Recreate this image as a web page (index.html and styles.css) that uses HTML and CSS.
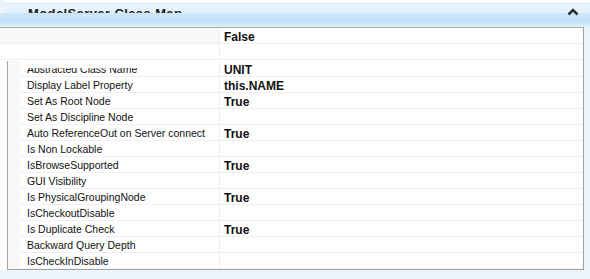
FILE: index.html
```html
<!DOCTYPE html>
<html>
<head>
<meta charset="utf-8">
<link rel="stylesheet" href="styles.css">
</head>
<body>
<div class="panel">
  <div class="head">
    <div class="head-top"><span class="title">ModelServer Class Map</span></div>
    <div class="head-band"></div>
    <svg class="chevron" width="12" height="8" viewBox="0 0 12 8"><polyline points="1.5,6.5 6,2 10.5,6.5" fill="none" stroke="#2b2f33" stroke-width="2.6"/></svg>
  </div>
  <div class="grid">
    <div class="row first"><div class="name"></div><div class="val">False</div></div>
    <div class="row"><div class="name"></div><div class="val"></div></div>
    <div class="body">
      <div class="gutter"></div>
      <div class="rows">
        <div class="row"><div class="name"><span class="clipped">Abstracted Class Name</span></div><div class="val">UNIT</div></div>
        <div class="row"><div class="name">Display Label Property</div><div class="val">this.NAME</div></div>
        <div class="row"><div class="name">Set As Root Node</div><div class="val">True</div></div>
        <div class="row"><div class="name">Set As Discipline Node</div><div class="val"></div></div>
        <div class="row"><div class="name">Auto ReferenceOut on Server connect</div><div class="val">True</div></div>
        <div class="row"><div class="name">Is Non Lockable</div><div class="val"></div></div>
        <div class="row"><div class="name">IsBrowseSupported</div><div class="val">True</div></div>
        <div class="row"><div class="name">GUI Visibility</div><div class="val"></div></div>
        <div class="row"><div class="name">Is PhysicalGroupingNode</div><div class="val">True</div></div>
        <div class="row"><div class="name">IsCheckoutDisable</div><div class="val"></div></div>
        <div class="row"><div class="name">Is Duplicate Check</div><div class="val">True</div></div>
        <div class="row"><div class="name">Backward Query Depth</div><div class="val"></div></div>
        <div class="row"><div class="name">IsCheckInDisable</div><div class="val"></div></div>
      </div>
    </div>
  </div>
</div>
</body>
</html>
```
FILE: styles.css
```css
html, body {
  margin: 0;
  padding: 0;
}
body {
  width: 590px;
  height: 279px;
  overflow: hidden;
  background: #ebf4fa;
  font-family: "Liberation Sans", Arial, sans-serif;
}
.panel {
  display: flex;
  flex-direction: column;
}
.head {
  position: relative;
}
.head-top {
  height: 13px;
  overflow: hidden;
  background: linear-gradient(#ffffff 0, #ffffff 3px, #d9e6f0 3px, #d9e6f0 4px, #e9f4fc 4px, #e2f0fb 13px);
  margin-left: 5px;
  padding-left: 23px;
}
.title {
  display: block;
  font-size: 13px;
  font-weight: bold;
  color: #1e1e1e;
  line-height: 13px;
  padding-top: 7px;
  letter-spacing: 0.4px;
}
.head-band {
  height: 14px;
  background: linear-gradient(#cfe8f9 0, #c2e1f7 7px, #c9e5f8 10px, #e3f1fb 14px);
}
.chevron {
  position: absolute;
  left: 567px;
  top: 8px;
}
.grid {
  width: 583px;
  height: 242px;
  border-top: 1px solid #a9a9a9;
  border-right: 1px solid #a0a0a0;
  background: #ffffff;
  display: flex;
  flex-direction: column;
}
.row {
  display: flex;
  height: 16px;
  box-sizing: border-box;
  border-bottom: 1px solid #f1f1f1;
}
.row.first .name {
  background: #f9f9f9;
}
.name {
  width: 220px;
  flex: none;
  box-sizing: border-box;
  border-right: 1px solid #f0f0f0;
  font-size: 10.5px;
  line-height: 17px;
  color: #111111;
  white-space: nowrap;
  overflow: hidden;
}
.val {
  flex: 1;
  padding-left: 4px;
  font-size: 12px;
  font-weight: bold;
  line-height: 18px;
  color: #111111;
  white-space: nowrap;
}
.body {
  display: flex;
  flex: 1;
  margin-top: 1px;
}
.gutter {
  width: 12px;
  flex: none;
  margin-left: 7px;
  border-left: 1px solid #a3a3a3;
  border-bottom: 1px solid #a3a3a3;
  background: #f8f8f8;
}
.rows {
  flex: 1;
  border-bottom: 1px solid #a3a3a3;
  display: flex;
  flex-direction: column;
}
.rows .name {
  width: 200px;
  padding-left: 7px;
}
.rows .val {
  padding-left: 4px;
}
.clipped {
  display: inline-block;
  clip-path: inset(7px 0 0 0);
}
```
